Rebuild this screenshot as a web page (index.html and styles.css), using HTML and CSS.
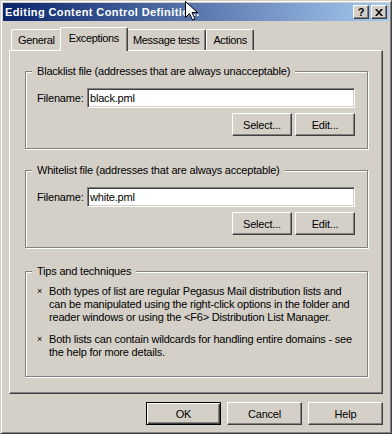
FILE: index.html
```html
<!DOCTYPE html>
<html lang="en">
  <head>
    <meta charset="UTF-8" />
    <title>Editing Content Control Definition</title>
    <link rel="stylesheet" href="styles.css">
  </head>
  <body>
    <div class="window">
      <div class="titlebar">
        <span class="title">Editing Content Control Definitio...</span>
        <div class="caption-buttons">
          <span class="cap-btn">?</span>
          <span class="cap-btn">
            <svg width="8" height="7" viewBox="0 0 8 7">
              <path d="M0 0h2l2 2.5 2-2.5h2l-3 3.5 3 3.5h-2l-2-2.5-2 2.5h-2l3-3.5z" fill="#000" />
            </svg>
          </span>
        </div>
        <!-- mouse pointer sitting over the title -->
        <svg class="cursor" width="13" height="20" viewBox="0 0 13 20">
          <path d="M0.5 0.5v16l4-4 3 6.5 2.5-1-3-6.5h5.5z" fill="#fff" stroke="#000" stroke-width="1" />
        </svg>
      </div>

      <div class="content">
        <div class="tabs">
          <div class="tab">General</div>
          <div class="tab active">Exceptions</div>
          <div class="tab">Message tests</div>
          <div class="tab">Actions</div>
        </div>

        <div class="panel">
          <div class="group">
            <div class="group-title">Blacklist file (addresses that are always unacceptable)</div>
            <div class="field-row">
              <label class="field-label">Filename:</label>
              <div class="textbox">black.pml</div>
            </div>
            <div class="btn-row">
              <button class="btn">Select...</button>
              <button class="btn">Edit...</button>
            </div>
          </div>

          <div class="group">
            <div class="group-title">Whitelist file (addresses that are always acceptable)</div>
            <div class="field-row">
              <label class="field-label">Filename:</label>
              <div class="textbox">white.pml</div>
            </div>
            <div class="btn-row">
              <button class="btn">Select...</button>
              <button class="btn">Edit...</button>
            </div>
          </div>

          <div class="group tips">
            <div class="group-title">Tips and techniques</div>
            <ul class="tips-list">
              <li class="tip">
                <span class="bullet">×</span>
                <span>Both types of list are regular Pegasus Mail distribution lists and can be manipulated using the right-click options in the folder and reader windows or using the &lt;F6&gt; Distribution List Manager.</span>
              </li>
              <li class="tip">
                <span class="bullet">×</span>
                <span>Both lists can contain wildcards for handling entire domains - see the help for more details.</span>
              </li>
            </ul>
          </div>
        </div>

        <div class="dialog-buttons">
          <button class="btn wide default">OK</button>
          <button class="btn wide">Cancel</button>
          <button class="btn wide">Help</button>
        </div>
      </div>
    </div>
  </body>
</html>
```

FILE: styles.css
```css
html,
body {
  margin: 0;
}
body {
  background: #d4d0c8;
  font-family: "Liberation Sans", Arial, sans-serif;
  font-size: 11px;
  letter-spacing: -0.2px;
  color: #000;
}

/* window frame */
.window {
  width: 392px;
  height: 434px;
  box-sizing: border-box;
  border: 1px solid;
  border-color: #d4d0c8 #404040 #404040 #d4d0c8;
  box-shadow: inset 1px 1px #fff, inset -1px -1px #808080;
  padding: 2px;
  display: flex;
  flex-direction: column;
}
.titlebar {
  position: relative;
  height: 18px;
  flex: none;
  display: flex;
  align-items: center;
  padding-left: 2px;
  background: linear-gradient(to right, #0a246a, #a6caf0);
}
.title {
  color: #fff;
  font-weight: bold;
  font-size: 11px;
  letter-spacing: 0.4px;
  white-space: nowrap;
}
.caption-buttons {
  margin-left: auto;
  display: flex;
  gap: 2px;
  padding-right: 2px;
}
.cap-btn {
  width: 16px;
  height: 14px;
  box-sizing: border-box;
  background: #d4d0c8;
  border: 1px solid;
  border-color: #fff #404040 #404040 #fff;
  box-shadow: inset -1px -1px #808080;
  display: flex;
  align-items: center;
  justify-content: center;
  font-weight: bold;
  font-size: 11px;
  line-height: 1;
}
.cursor {
  position: absolute;
  left: 182px;
  top: -2px;
}

/* body of the dialog */
.content {
  flex: 1;
  padding: 6px 6px 0;
  display: flex;
  flex-direction: column;
}
.tabs {
  height: 23px;
  display: flex;
  align-items: flex-end;
  padding-left: 2px;
  letter-spacing: -0.35px;
}
.tab {
  height: 21px;
  box-sizing: border-box;
  padding: 0 6px 1px;
  border: 1px solid;
  border-color: #fff #404040 transparent #fff;
  border-bottom: none;
  border-radius: 2px 2px 0 0;
  box-shadow: inset -1px 0 #808080;
  display: flex;
  align-items: center;
}
.tab.active {
  position: relative;
  z-index: 1;
  height: 24px;
  margin: 0 -2px -1px;
  padding: 0 8px 3px;
  background: #d4d0c8;
}
.panel {
  height: 344px;
  box-sizing: border-box;
  border: 1px solid;
  border-color: #fff #404040 #404040 #fff;
  box-shadow: inset -1px -1px #808080;
  padding: 20px 14px 0 15px;
  display: flex;
  flex-direction: column;
}

/* etched group boxes */
.group {
  height: 78px;
  box-sizing: border-box;
  border: 1px solid #808080;
  box-shadow: inset 1px 1px #fff, 1px 1px #fff;
  padding: 0 12px 0 11px;
  display: flex;
  flex-direction: column;
}
.group + .group {
  margin-top: 21px;
}
.group.tips {
  height: 106px;
  margin-top: 23px;
  padding-right: 9px;
}
.group-title {
  align-self: flex-start;
  margin: -7px 0 0 -5px;
  padding: 0 5px;
  line-height: 13px;
  background: #d4d0c8;
  white-space: nowrap;
}
.field-row {
  display: flex;
  align-items: center;
  margin-top: 10px;
}
.field-label {
  width: 50px;
}
.textbox {
  flex: 1;
  height: 20px;
  box-sizing: border-box;
  border: 1px solid;
  border-color: #808080 #fff #fff #808080;
  box-shadow: inset 1px 1px #404040, inset -1px -1px #d4d0c8;
  background: #fff;
  padding: 0 2px;
  line-height: 18px;
}
.btn-row {
  display: flex;
  justify-content: flex-end;
  gap: 3px;
  margin-top: 5px;
}
.btn {
  width: 60px;
  height: 23px;
  box-sizing: border-box;
  padding: 0;
  background: #d4d0c8;
  border: 1px solid;
  border-color: #fff #404040 #404040 #fff;
  box-shadow: inset -1px -1px #808080;
  font: inherit;
  letter-spacing: inherit;
  color: #000;
}
.btn.wide {
  width: 75px;
}
.btn.default {
  border-color: #000;
  box-shadow: inset 1px 1px #fff, inset -1px -1px #404040, inset -2px -2px #808080;
}

/* tips list */
.tips-list {
  list-style: none;
  margin: 7px 0 0;
  padding: 0;
  line-height: 13px;
}
.tip {
  display: flex;
}
.tip + .tip {
  margin-top: 9px;
}
.bullet {
  flex: none;
  width: 12px;
  font-size: 9px;
}

.dialog-buttons {
  display: flex;
  justify-content: flex-end;
  gap: 6px;
  margin-top: 8px;
}
```
